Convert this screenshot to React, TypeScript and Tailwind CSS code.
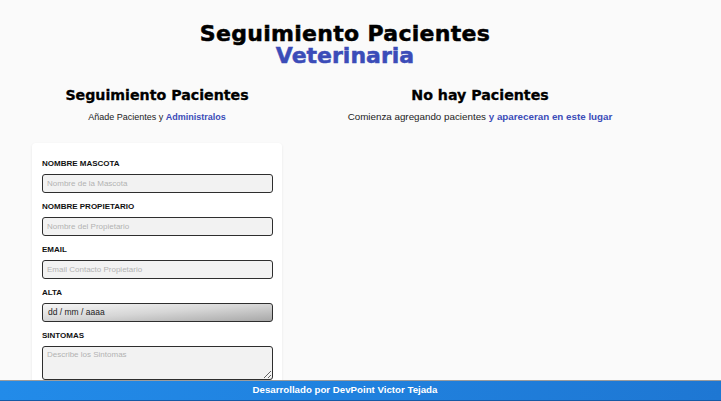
import React from "react";

const heading = { fontFamily: '"DejaVu Sans", "Liberation Sans", sans-serif' };

function Field({
  label,
  placeholder,
  type = "text",
}: {
  label: string;
  placeholder: string;
  type?: string;
}) {
  return (
    <div className="mb-[9px]">
      <label className="block h-[10px] text-[8px] leading-[10px] font-bold uppercase text-[#111]">
        {label}
      </label>
      <input
        type={type}
        placeholder={placeholder}
        className="mt-[5px] block h-[19px] w-[231px] rounded-[3px] border border-[#2e2e2e] bg-[#f2f2f2] px-[4px] text-[8px] text-[#222] outline-none placeholder:text-[#b3b3b3]"
      />
    </div>
  );
}

export default function App() {
  return (
    <div
      className="flex h-screen flex-col overflow-hidden bg-[#fafafa]"
      style={{ fontFamily: '"Liberation Sans", Arial, sans-serif' }}
    >
      <main className="min-h-0 flex-1 overflow-hidden">
        <div
          className="pt-[23px] pr-[31px] text-center text-[22px] font-bold text-black [-webkit-text-stroke:0.5px_currentcolor]"
          style={heading}
        >
          <h1 className="h-[22px] leading-[22px] tracking-[0.3px]">Seguimiento Pacientes</h1>
          <p className="h-[22px] leading-[22px] text-[#3b4cb8]">Veterinaria</p>
        </div>

        <div className="mt-[20px] flex pl-[32px]">
          <div className="w-[250px]">
            <h2
              className="text-center text-[14.2px] leading-[17px] font-bold text-black [-webkit-text-stroke:0.3px_currentcolor]"
              style={heading}
            >
              Seguimiento Pacientes
            </h2>
            <p className="mt-[7px] text-center text-[9px] leading-[12px] text-[#222]">
              Añade Pacientes y{" "}
              <span className="font-bold text-[#3b4cb8]">Administralos</span>
            </p>

            <form className="mt-[20px] rounded-[4px] bg-white px-[10px] pt-[16px] pb-[10px] shadow-[0_1px_3px_rgba(0,0,0,0.08)]">
              <Field label="Nombre Mascota" placeholder="Nombre de la Mascota" />
              <Field label="Nombre Propietario" placeholder="Nombre del Propietario" />
              <Field label="Email" placeholder="Email Contacto Propietario" type="email" />
              <div className="mb-[9px]">
                <label className="block h-[10px] text-[8px] leading-[10px] font-bold uppercase text-[#111]">
                  Alta
                </label>
                <div className="mt-[5px] flex h-[19px] w-[231px] items-center rounded-[3px] border border-[#2e2e2e] bg-linear-to-br from-[#f6f6f6] via-[#d6d6d6] to-[#a8a8a8] px-[5px] text-[8.5px] text-[#222]">
                  dd / mm / aaaa
                </div>
              </div>
              <div>
                <label className="block h-[10px] text-[8px] leading-[10px] font-bold uppercase text-[#111]">
                  Sintomas
                </label>
                <textarea
                  placeholder="Describe los Sintomas"
                  className="mt-[5px] block h-[34px] w-[231px] rounded-[3px] border border-[#2e2e2e] bg-[#f2f2f2] px-[4px] py-[2px] text-[8px] text-[#222] outline-none placeholder:text-[#b3b3b3]"
                />
              </div>
            </form>
          </div>

          <div className="w-[396px]">
            <h2
              className="text-center text-[14.2px] leading-[17px] font-bold text-black [-webkit-text-stroke:0.3px_currentcolor]"
              style={heading}
            >
              No hay Pacientes
            </h2>
            <p className="mt-[7px] text-center text-[9.8px] leading-[12px] text-[#222]">
              Comienza agregando pacientes{" "}
              <span className="font-bold text-[#3b4cb8]">y apareceran en este lugar</span>
            </p>
          </div>
        </div>
      </main>

      <footer className="flex h-[21px] shrink-0 items-center justify-center border-t border-b border-t-[#9c9c9c] border-b-[#1559a5] bg-linear-to-r from-[#228be9] to-[#1e77d3] pr-[31px] text-[9.7px] font-bold text-white">
        Desarrollado por DevPoint Victor Tejada
      </footer>
    </div>
  );
}
